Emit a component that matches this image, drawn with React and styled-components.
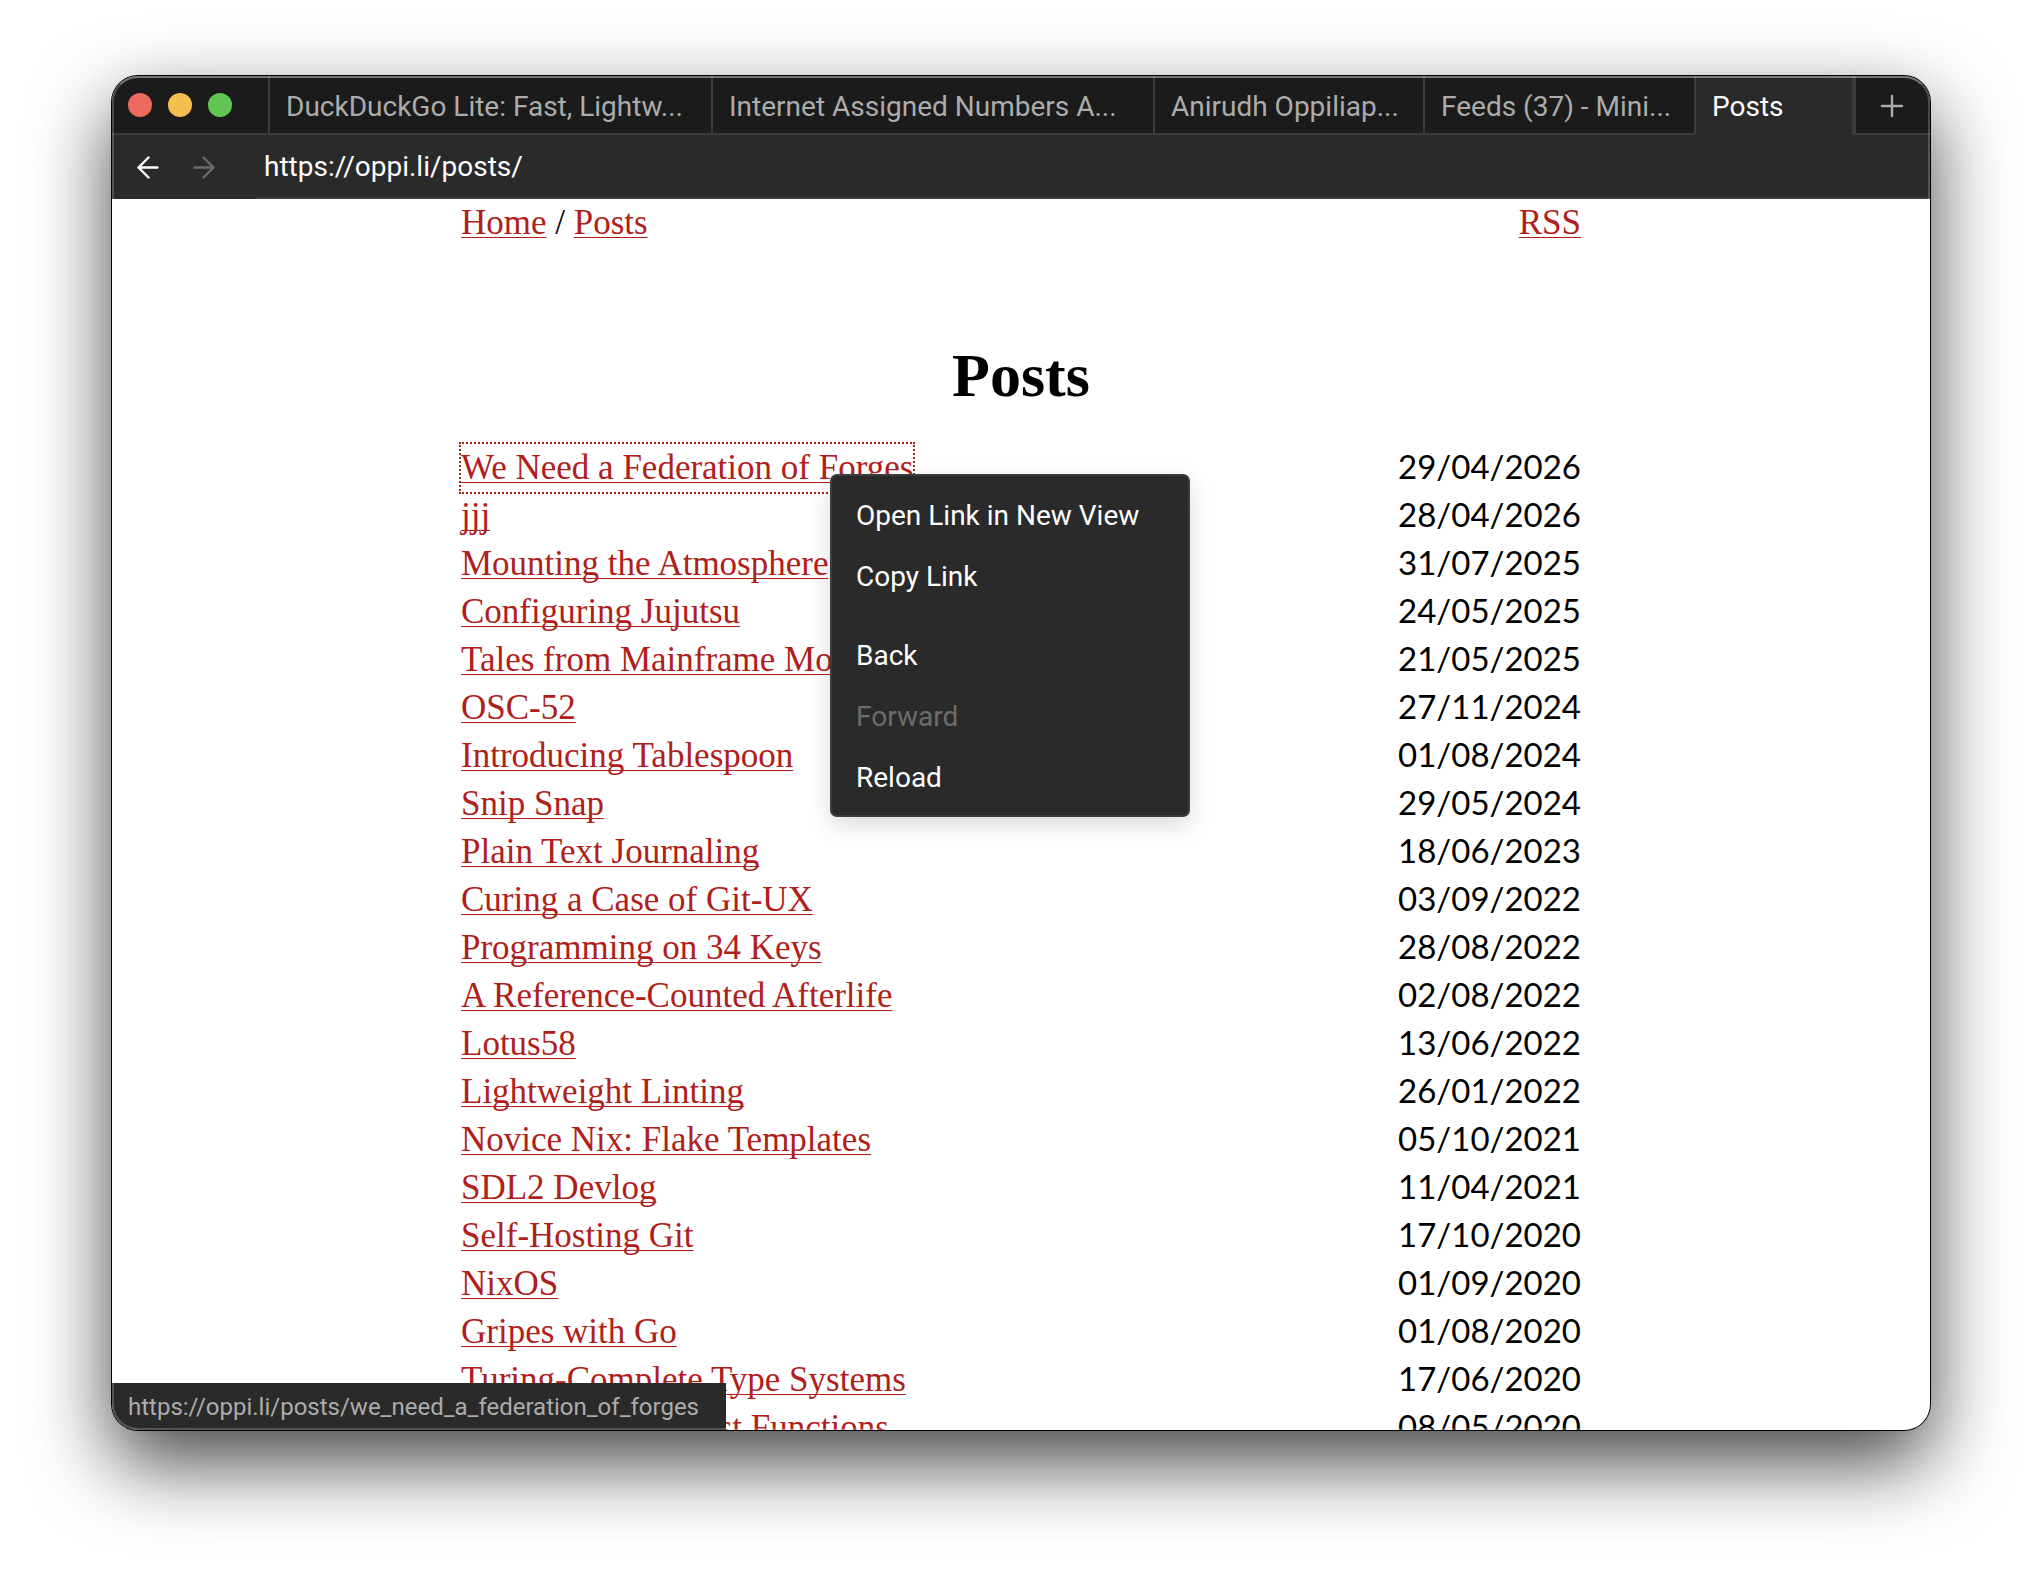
import { useState } from "react";
import styled, { createGlobalStyle } from "styled-components";

const GlobalStyle = createGlobalStyle`
  * {
    box-sizing: border-box;
  }

  body {
    margin: 0;
    background: #fff;
  }
`

const Desktop = styled.div`
  display: flex;
  height: 100vh;
  padding: 76px 112px 148px;
  overflow: hidden;
`

const Window = styled.div`
  position: relative;
  display: flex;
  flex-direction: column;
  flex: 1;
  min-width: 0;
  overflow: hidden;
  border-radius: 26px;
  background: #fff;
  font-family: Roboto, "Liberation Sans", sans-serif;
  font-size: 28px;
  box-shadow: 0 0 0 1px #000, 0 32px 80px rgba(0, 0, 0, 0.74);

  /* light rim along the edge of the window, only visible on dark parts */
  &::after {
    content: "";
    position: absolute;
    inset: 0;
    border: 2px solid rgba(255, 255, 255, 0.2);
    border-top-color: rgba(255, 255, 255, 0.4);
    border-radius: 26px;
    pointer-events: none;
  }
`

const TabBar = styled.div`
  display: flex;
  flex: none;
  height: 59px;
  background: #1b1b1b;
`

const TrafficLights = styled.div`
  display: flex;
  align-items: center;
  gap: 16px;
  width: 156px;
  padding-left: 16px;
  border-bottom: 2px solid #3c3c3c;
`

const Light = styled.button`
  width: 24px;
  height: 24px;
  padding: 0;
  border: 0;
  border-radius: 50%;
  background: ${props => props.$color};
`

const Tabs = styled.div`
  display: grid;
  grid-template-columns:
    minmax(0, 443fr) minmax(0, 442fr) minmax(0, 270fr)
    minmax(0, 271fr) minmax(0, 160fr);
  flex: 1;
  min-width: 0;
`

const Tab = styled.button`
  padding: 4px 8px 0 16px;
  overflow: hidden;
  border: 0 solid #3c3c3c;
  border-left-width: 2px;
  border-bottom-width: 2px;
  background: none;
  color: #acacac;
  font: inherit;
  text-align: left;
  white-space: nowrap;
`

const SelectedTab = styled(Tab)`
  border-right-width: 2px;
  border-bottom-color: #2a2a2a;
  background: #2a2a2a;
  color: #fff;
`

const NewTab = styled.button`
  display: flex;
  align-items: center;
  justify-content: center;
  width: 76px;
  padding: 2px 2px 0 0;
  border: 0 solid #3c3c3c;
  border-left-width: 2px;
  border-bottom-width: 2px;
  background: none;
  color: #acacac;
`

const Toolbar = styled.div`
  display: flex;
  flex: none;
  height: 64px;
  background: #2a2a2a;
`

const NavButtons = styled.div`
  display: flex;
  align-items: center;
  gap: 32px;
  width: 144px;
  padding-left: 24px;
`

const NavButton = styled.button`
  display: flex;
  padding: 0;
  border: 0;
  background: none;
  color: #fff;

  &:disabled {
    color: #6c6c6c;
  }
`

const Address = styled.input`
  flex: 1;
  min-width: 0;
  padding: 0 8px;
  border: 0;
  border-bottom: 2px solid #3c3c3c;
  outline: none;
  background: none;
  color: #fff;
  font: inherit;
`

const Page = styled.main`
  flex: 1;
  min-height: 0;
  overflow: hidden;
  color: #000;
  font-family: "Liberation Serif", serif;
  font-size: 35px;
  line-height: 48px;
`

const Column = styled.div`
  position: relative;
  max-width: 1120px;
  margin: 0 auto;
`

const PageHeader = styled.header`
  display: flex;
  justify-content: space-between;
  height: 48px;
`

const Link = styled.a`
  display: inline-block;
  height: 48px;
  color: #b0201a;
  text-decoration: underline 1px;
  text-underline-offset: 3px;
  text-decoration-skip-ink: none;
  white-space: nowrap;
  vertical-align: top;
`

const FocusedLink = styled(Link)`
  outline: 2px dotted #b0201a;
`

const Title = styled.h1`
  margin: 92px 0 33px;
  font-size: 62px;
  line-height: 72px;
  text-align: center;
`

const PostTable = styled.table`
  width: 100%;
  border-collapse: collapse;

  td {
    height: 48px;
    padding: 0;
    vertical-align: top;
  }
`

const PostDate = styled.td`
  font-family: Lato, sans-serif;
  font-size: 33px;
  line-height: 44px;
  text-align: right;
`

const Menu = styled.div`
  position: absolute;
  top: 275px;
  left: 369px;
  display: flex;
  flex-direction: column;
  width: 360px;
  padding: 9px 0 7px;
  border: 2px solid #3c3c3c;
  border-radius: 7px;
  background: #2a2a2a;
  box-shadow: 0 8px 24px rgba(0, 0, 0, 0.15);
  font-family: Roboto, "Liberation Sans", sans-serif;
`

const MenuItem = styled.button`
  height: 61px;
  padding: 0 24px;
  border: 0;
  background: none;
  color: #fff;
  font: inherit;
  font-size: 28px;
  text-align: left;

  &:disabled {
    color: #6c6c6c;
  }
`

const MenuGap = styled.div`
  height: 18px;
`

const Status = styled.div`
  position: absolute;
  bottom: 0;
  left: 0;
  height: 47px;
  padding: 2px 27px 0 16px;
  background: #2a2a2a;
  color: #acacac;
  font-size: 24px;
  line-height: 45px;
`

const tabs = [
  "DuckDuckGo Lite: Fast, Lightw...",
  "Internet Assigned Numbers A...",
  "Anirudh Oppiliap...",
  "Feeds (37) - Mini...",
  "Posts",
]

const posts = [
  ["We Need a Federation of Forges", "29/04/2026"],
  ["jjj", "28/04/2026"],
  ["Mounting the Atmosphere", "31/07/2025"],
  ["Configuring Jujutsu", "24/05/2025"],
  ["Tales from Mainframe Modernization", "21/05/2025"],
  ["OSC-52", "27/11/2024"],
  ["Introducing Tablespoon", "01/08/2024"],
  ["Snip Snap", "29/05/2024"],
  ["Plain Text Journaling", "18/06/2023"],
  ["Curing a Case of Git-UX", "03/09/2022"],
  ["Programming on 34 Keys", "28/08/2022"],
  ["A Reference-Counted Afterlife", "02/08/2022"],
  ["Lotus58", "13/06/2022"],
  ["Lightweight Linting", "26/01/2022"],
  ["Novice Nix: Flake Templates", "05/10/2021"],
  ["SDL2 Devlog", "11/04/2021"],
  ["Self-Hosting Git", "17/10/2020"],
  ["NixOS", "01/09/2020"],
  ["Gripes with Go", "01/08/2020"],
  ["Turing-Complete Type Systems", "17/06/2020"],
  ["Auto-Currying Rust Functions", "08/05/2020"],
]

function Icon({ d }) {
  return (
    <svg width="24" height="24" viewBox="0 0 24 24" fill="none" stroke="currentColor"
      strokeWidth="2.4" strokeLinecap="round" strokeLinejoin="round" aria-hidden="true">
      <path d={d} />
    </svg>
  )
}

function TabStrip() {
  const [selected, setSelected] = useState("Posts");

  return (
    <Tabs role="tablist">
      {tabs.map(title => {
        const El = title === selected ? SelectedTab : Tab;
        return (
          <El key={title} role="tab" aria-selected={title === selected}
            onClick={() => setSelected(title)}>
            {title}
          </El>
        )
      })}
    </Tabs>
  )
}

function PostRow({ title, date, focused }) {
  const El = focused ? FocusedLink : Link;
  return (
    <tr>
      <td><El href="#">{title}</El></td>
      <PostDate>{date}</PostDate>
    </tr>
  )
}

function ContextMenu() {
  return (
    <Menu role="menu">
      <MenuItem role="menuitem">Open Link in New View</MenuItem>
      <MenuItem role="menuitem">Copy Link</MenuItem>
      <MenuGap role="separator" />
      <MenuItem role="menuitem">Back</MenuItem>
      <MenuItem role="menuitem" disabled>Forward</MenuItem>
      <MenuItem role="menuitem">Reload</MenuItem>
    </Menu>
  )
}

export default function App() {
  const [url, setUrl] = useState("https://oppi.li/posts/");

  return (
    <Desktop>
      <GlobalStyle />
      <Window>
        <TabBar>
          <TrafficLights>
            <Light $color="#ec6a5e" aria-label="Close" />
            <Light $color="#f4bf4f" aria-label="Minimize" />
            <Light $color="#61c554" aria-label="Zoom" />
          </TrafficLights>
          <TabStrip />
          <NewTab aria-label="New tab">
            <Icon d="M12 2v20M2 12h20" />
          </NewTab>
        </TabBar>
        <Toolbar>
          <NavButtons>
            <NavButton aria-label="Back">
              <Icon d="M12.5 2.5L2.5 12.5l10 10M2.5 12.5h19" />
            </NavButton>
            <NavButton aria-label="Forward" disabled>
              <Icon d="M11.5 2.5l10 10-10 10M21.5 12.5h-19" />
            </NavButton>
          </NavButtons>
          <Address aria-label="Address" value={url} onChange={e => setUrl(e.target.value)} />
        </Toolbar>
        <Page>
          <Column>
            <PageHeader>
              <nav>
                <Link href="#">Home</Link> / <Link href="#">Posts</Link>
              </nav>
              <Link href="#">RSS</Link>
            </PageHeader>
            <Title>Posts</Title>
            <PostTable>
              <tbody>
                {posts.map(([title, date], i) => (
                  <PostRow key={title} title={title} date={date} focused={i === 0} />
                ))}
              </tbody>
            </PostTable>
            <ContextMenu />
          </Column>
        </Page>
        <Status>https://oppi.li/posts/we_need_a_federation_of_forges</Status>
      </Window>
    </Desktop>
  )
}
